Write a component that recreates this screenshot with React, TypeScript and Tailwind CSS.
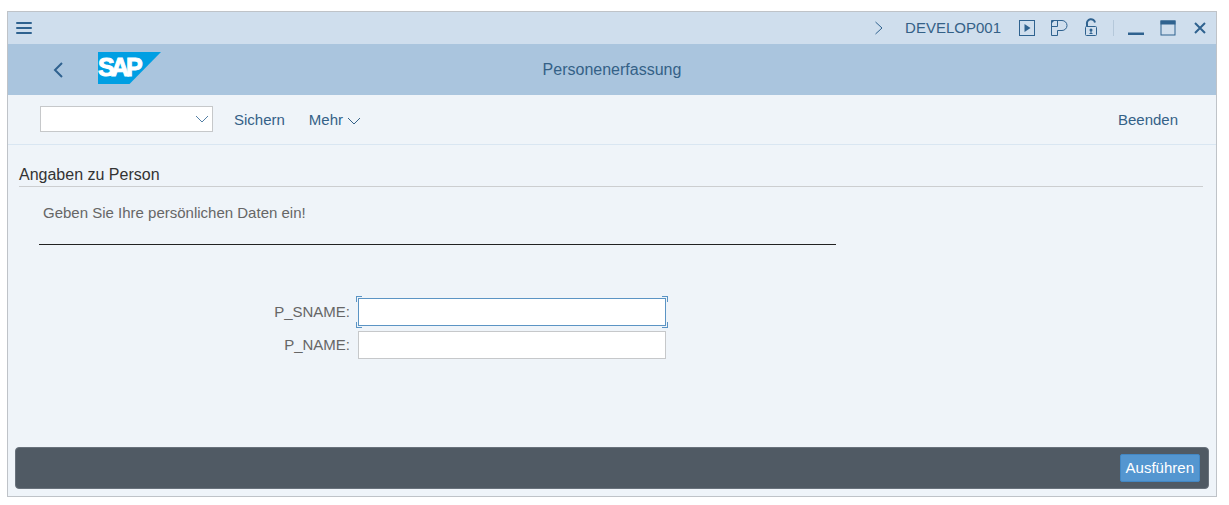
import type { ReactNode } from "react";

function IconButton({ label, className, children }: { label: string; className?: string; children: ReactNode }) {
  return (
    <button type="button" aria-label={label} className={`flex h-6 w-6 items-center justify-center text-[#2f628f] ${className ?? ""}`}>
      {children}
    </button>
  );
}

function TitleBar() {
  return (
    <div className="flex h-8 items-center bg-[#cfdeed] pr-1 pl-1 text-[#346187]">
      <IconButton label="Menü">
        <svg width="18" height="14" viewBox="0 0 18 14" fill="none" stroke="currentColor" strokeWidth="2" strokeLinecap="round">
          <path d="M2 2h14M2 7h14M2 12h14" />
        </svg>
      </IconButton>
      <div className="ml-auto flex items-center">
        <IconButton label="Weiter" className="mr-3.5">
          <svg width="12" height="14" viewBox="0 0 12 14" fill="none" stroke="currentColor">
            <path d="M2.500 1l6.500 6l-6.500 6" />
          </svg>
        </IconButton>
        <span className="mr-3.5 text-[15px] leading-5">DEVELOP001</span>
        <div className="flex items-center gap-2">
          <IconButton label="Neues Fenster">
            <svg width="18" height="18" viewBox="0 0 18 18" fill="none" stroke="currentColor">
              <rect x="1.500" y="1.500" width="15" height="15" />
              <path d="M6.500 5v8l6-4z" fill="currentColor" stroke="none" />
            </svg>
          </IconButton>
          <IconButton label="Personalisierung">
            <svg width="18" height="18" viewBox="0 0 18 18" fill="none" stroke="currentColor">
              <path d="M1.500 1.500h10.500a5 5 0 0 1 0 10H7.500v5h-6z" />
              <path d="M7.500 1.500v6h-6" />
              <path d="M1.500 1.500h3l-3 3z" fill="currentColor" stroke="none" />
            </svg>
          </IconButton>
          <IconButton label="Entsperren">
            <svg width="16" height="20" viewBox="0 0 16 20" fill="none" stroke="currentColor">
              <rect x="2.500" y="8.500" width="11" height="9" rx="1" />
              <path d="M4 8.500V6a4 4 0 0 1 8-1.500" strokeWidth="2" />
              <circle cx="8" cy="12" r="1.500" fill="currentColor" stroke="none" />
              <path d="M8 12v4M6.500 15.500h3" />
            </svg>
          </IconButton>
        </div>
        <span className="mx-2.5 h-4 w-px bg-[#b5c8da]" />
        <div className="flex items-center gap-2">
          <IconButton label="Minimieren">
            <svg width="16" height="16" viewBox="0 0 16 16" fill="currentColor">
              <path d="M0 12.500h16v2.500H0z" />
            </svg>
          </IconButton>
          <IconButton label="Maximieren">
            <svg width="16" height="16" viewBox="0 0 16 16" fill="none" stroke="currentColor">
              <rect x="1" y="1" width="14" height="14" />
              <path d="M.5.5h15v4H.5z" fill="currentColor" stroke="none" />
            </svg>
          </IconButton>
          <IconButton label="Schließen">
            <svg width="14" height="14" viewBox="0 0 14 14" fill="none" stroke="currentColor" strokeWidth="2">
              <path d="M2 2l10 10M12 2L2 12" />
            </svg>
          </IconButton>
        </div>
      </div>
    </div>
  );
}

function SapLogo() {
  return (
    <svg width="64" height="32" viewBox="0 0 64 32" role="img" aria-label="SAP">
      <path d="M0 0h63L31.500 32H0z" fill="#009fe3" />
      <text
        x="0 13 28"
        y="24"
        fill="#fff"
        stroke="#fff"
        strokeWidth="1"
        className="font-['Liberation_Sans',Arial,sans-serif] text-[25px] font-bold"
      >
        SAP
      </text>
    </svg>
  );
}

function Header() {
  return (
    <header className="grid h-[51px] grid-cols-[1fr_auto_1fr] items-center bg-[#aac5de]">
      <div className="flex items-center gap-7 pl-[38px]">
        <IconButton label="Zurück">
          <svg width="12" height="18" viewBox="0 0 12 18" fill="none" stroke="currentColor" strokeWidth="2">
            <path d="M10 2L3 9l7 7" />
          </svg>
        </IconButton>
        <div className="pb-1">
          <SapLogo />
        </div>
      </div>
      <h1 className="text-base text-[#346187]">Personenerfassung</h1>
    </header>
  );
}

function Chevron() {
  return (
    <svg width="14" height="8" viewBox="0 0 14 8" fill="none" stroke="currentColor">
      <path d="M1 1l6 6L13 1" />
    </svg>
  );
}

function Toolbar() {
  return (
    <div className="flex h-[50px] items-center border-b border-[#d9e6f2] pr-[38px] pl-8 text-[15px] text-[#346187]">
      <div className="relative mr-[21px] mb-0.5 w-[173px]">
        <select aria-label="Transaktionscode" className="block h-[26px] w-full appearance-none border border-[#c6c8ca] bg-white px-2 outline-none">
          <option></option>
        </select>
        <span className="pointer-events-none absolute inset-y-0 right-1 flex items-center text-[#5480a6]">
          <Chevron />
        </span>
      </div>
      <button type="button" className="mr-6 pt-0.5">Sichern</button>
      <button type="button" className="flex items-center gap-1 pt-0.5">
        Mehr
        <Chevron />
      </button>
      <button type="button" className="ml-auto pt-0.5">Beenden</button>
    </div>
  );
}

function Field({ id, label, active }: { id: string; label: string; active?: boolean }) {
  return (
    <div className="flex items-center">
      <label htmlFor={id} className="w-[319px] pr-2 text-right">{label}</label>
      <div className="relative w-[308px]">
        <input
          id={id}
          type="text"
          className={`block h-7 w-full border bg-white px-2 text-[#333] outline-none ${active ? "border-[#5b94c4]" : "border-[#c6c8ca]"}`}
        />
        {active && (
          <>
            <span className="absolute -top-0.5 -left-0.5 h-1.5 w-1.5 border-t border-l border-[#5b94c4]" />
            <span className="absolute -top-0.5 -right-0.5 h-1.5 w-1.5 border-t border-r border-[#5b94c4]" />
            <span className="absolute -bottom-0.5 -left-0.5 h-1.5 w-1.5 border-b border-l border-[#5b94c4]" />
            <span className="absolute -right-0.5 -bottom-0.5 h-1.5 w-1.5 border-r border-b border-[#5b94c4]" />
          </>
        )}
      </div>
    </div>
  );
}

export default function App() {
  return (
    <div className="flex min-h-screen flex-col bg-white pt-[11px] pr-3 pb-2 pl-[7px] font-['Liberation_Sans',Arial,sans-serif]">
      <div className="flex grow flex-col border border-[#bfc3c8] bg-[#eff4f9]">
        <TitleBar />
        <Header />
        <Toolbar />
        <main className="grow pt-[18px] pr-[13px] pb-6 pl-[11px] text-[15px] text-[#666]">
          <h2 className="border-b border-[#ccced0] text-base leading-[23px] text-[#333]">Angaben zu Person</h2>
          <p className="pt-4 pl-6 leading-5">Geben Sie Ihre persönlichen Daten ein!</p>
          <hr className="mt-[21px] ml-5 max-w-[797px] border-t border-[#222]" />
          <form className="mt-[53px] ml-5 flex flex-col gap-[5px]">
            <Field id="p-sname" label="P_SNAME:" active />
            <Field id="p-name" label="P_NAME:" />
          </form>
        </main>
        <footer className="mx-[7px] mb-[7px] flex h-[42px] items-center justify-end rounded border border-[#69727c] bg-[#505a64] pr-2">
          <button type="button" className="h-7 rounded-xs border border-[#4287c4] bg-[#5496d0] px-[5px] text-[15px] text-white">
            Ausführen
          </button>
        </footer>
      </div>
    </div>
  );
}
